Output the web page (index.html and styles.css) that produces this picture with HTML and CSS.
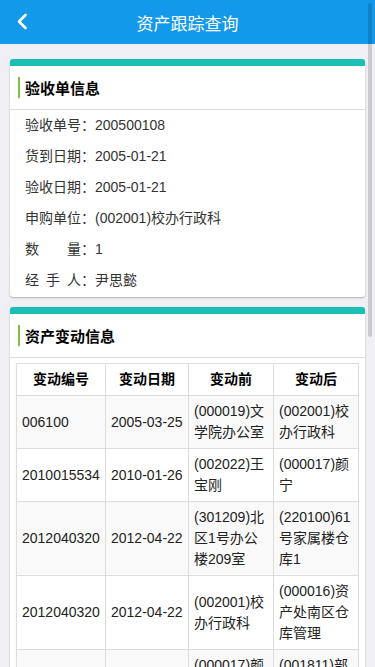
FILE: index.html
```html
<!DOCTYPE html>
<html lang="zh-CN">
<head>
    <meta charset="UTF-8">
    <meta name="viewport" content="width=device-width, initial-scale=1.0">
    <title>资产跟踪查询</title>
    <link rel="stylesheet" href="styles.css">
</head>
<body>
    <header class="top-bar">
        <a class="back-btn" href="#">
            <svg width="12" height="17" viewBox="0 0 12 17">
                <path d="M9.5 2 L3 8.5 L9.5 15" fill="none" stroke="#fff" stroke-width="2.6" stroke-linecap="round" stroke-linejoin="round"/>
            </svg>
        </a>
        <h1 class="top-title">资产跟踪查询</h1>
    </header>

    <div class="page">
        <!-- 验收单信息 -->
        <section class="card">
            <h2 class="card-title">验收单信息</h2>
            <div class="info-list">
                <div class="info-row"><span class="info-label">验收单号</span>：<span>200500108</span></div>
                <div class="info-row"><span class="info-label">货到日期</span>：<span>2005-01-21</span></div>
                <div class="info-row"><span class="info-label">验收日期</span>：<span>2005-01-21</span></div>
                <div class="info-row"><span class="info-label">申购单位</span>：<span>(002001)校办行政科</span></div>
                <div class="info-row"><span class="info-label">数量</span>：<span>1</span></div>
                <div class="info-row"><span class="info-label">经手人</span>：<span>尹思懿</span></div>
            </div>
        </section>

        <!-- 资产变动信息 -->
        <section class="card">
            <h2 class="card-title">资产变动信息</h2>
            <div class="table-wrap">
                <table class="change-table">
                    <colgroup>
                        <col class="c1"><col class="c2"><col class="c3"><col class="c4">
                    </colgroup>
                    <thead>
                        <tr>
                            <th>变动编号</th>
                            <th>变动日期</th>
                            <th>变动前</th>
                            <th>变动后</th>
                        </tr>
                    </thead>
                    <tbody>
                        <tr>
                            <td>006100</td>
                            <td>2005-03-25</td>
                            <td>(000019)文学院办公室</td>
                            <td>(002001)校办行政科</td>
                        </tr>
                        <tr>
                            <td>2010015534</td>
                            <td>2010-01-26</td>
                            <td>(002022)王宝刚</td>
                            <td>(000017)颜宁</td>
                        </tr>
                        <tr>
                            <td>2012040320</td>
                            <td>2012-04-22</td>
                            <td>(301209)北区1号办公楼209室</td>
                            <td>(220100)61号家属楼仓库1</td>
                        </tr>
                        <tr>
                            <td>2012040320</td>
                            <td>2012-04-22</td>
                            <td>(002001)校办行政科</td>
                            <td>(000016)资产处南区仓库管理</td>
                        </tr>
                        <tr>
                            <td>2013050216</td>
                            <td>2013-05-16</td>
                            <td>(000017)颜宁</td>
                            <td>(001811)部门资产仓库</td>
                        </tr>
                        <tr>
                            <td>2014031108</td>
                            <td>2014-03-11</td>
                            <td>(001811)部门资产仓库</td>
                            <td>(000016)资产处南区仓库管理</td>
                        </tr>
                        <tr>
                            <td>2015062203</td>
                            <td>2015-06-22</td>
                            <td>(000016)资产处南区仓库管理</td>
                            <td>(002001)校办行政科</td>
                        </tr>
                        <tr>
                            <td>2016090715</td>
                            <td>2016-09-07</td>
                            <td>(002001)校办行政科</td>
                            <td>(000019)文学院办公室</td>
                        </tr>
                        <tr>
                            <td>2017112002</td>
                            <td>2017-11-20</td>
                            <td>(000019)文学院办公室</td>
                            <td>(002022)王宝刚</td>
                        </tr>
                        <tr>
                            <td>2018041809</td>
                            <td>2018-04-18</td>
                            <td>(002022)王宝刚</td>
                            <td>(220100)61号家属楼仓库1</td>
                        </tr>
                        <tr>
                            <td>2019030512</td>
                            <td>2019-03-05</td>
                            <td>(220100)61号家属楼仓库1</td>
                            <td>(000016)资产处南区仓库管理</td>
                        </tr>
                    </tbody>
                </table>
            </div>
        </section>
    </div>

    <!-- 滚动条指示 -->
    <div class="scroll-thumb"></div>
</body>
</html>
```

FILE: styles.css
```css
body {
    margin: 0;
    font-family: "Liberation Sans", "Noto Sans CJK SC", sans-serif;
    font-size: 14px;
    color: #333;
    background-color: #efeff4;
}

.top-bar {
    display: flex;
    align-items: center;
    justify-content: center;
    position: relative;
    height: 44px;
    background-color: #1399ea;
}

.back-btn {
    position: absolute;
    left: 16px;
    top: 13px;
    display: block;
    width: 12px;
    height: 17px;
}

.back-btn svg {
    display: block;
}

.top-title {
    margin: 0;
    font-size: 17px;
    font-weight: normal;
    color: #fff;
}

.page {
    padding: 15px 10px 10px;
}

.card {
    background-color: #fff;
    border-top: 7px solid #1bbfb7;
    border-radius: 3px;
    box-shadow: 0 1px 2px rgba(0, 0, 0, 0.25);
    margin-bottom: 10px;
}

.card-title {
    display: flex;
    align-items: center;
    height: 43px;
    margin: 0;
    padding-left: 8px;
    font-size: 15px;
    font-weight: bold;
    color: #000;
    border-bottom: 1px solid #ddd;
}

.card-title::before {
    content: "";
    width: 2px;
    height: 21px;
    margin-right: 5px;
    background-color: #7cc242;
}

.info-list {
    padding: 0 15px 1px;
}

.info-row {
    display: flex;
    height: 31px;
    line-height: 31px;
}

.info-label {
    display: inline-block;
    width: 56px;
    text-align: justify;
    text-align-last: justify;
}

.table-wrap {
    padding: 5px 7px 8px 6px;
}

.change-table {
    width: 100%;
    table-layout: fixed;
    border-collapse: collapse;
    line-height: 21px;
}

.change-table .c1 { width: 89px; }
.change-table .c2 { width: 83px; }
.change-table .c3 { width: 85px; }
.change-table .c4 { width: 85px; }

.change-table th,
.change-table td {
    border: 1px solid #ddd;
    padding: 5px 5px;
    text-align: left;
    word-break: break-all;
    color: #222;
}

.change-table th {
    text-align: center;
    font-weight: bold;
    color: #000;
}

.change-table tbody tr:nth-child(odd) {
    background-color: #f9f9f9;
}

.scroll-thumb {
    position: fixed;
    top: 3px;
    right: 3px;
    width: 4px;
    height: 334px;
    border-radius: 2px;
    background-color: rgba(0, 0, 0, 0.15);
}
```
